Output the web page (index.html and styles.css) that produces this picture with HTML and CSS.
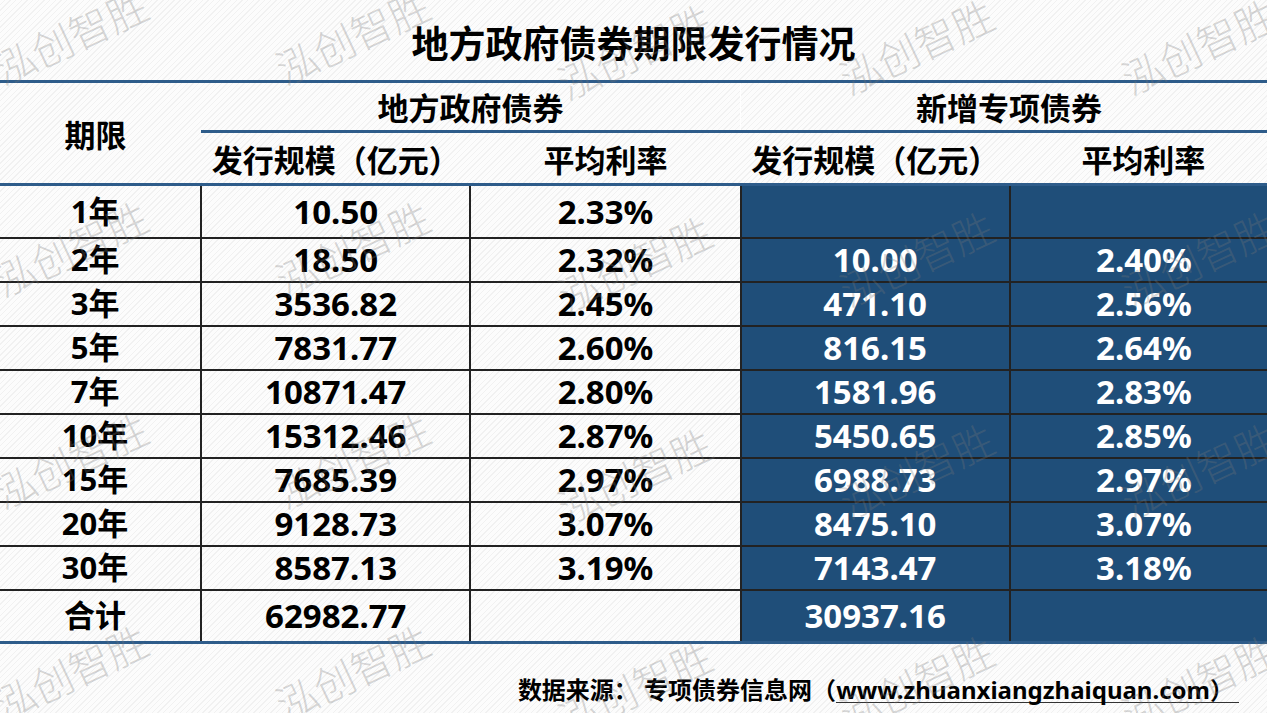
FILE: index.html
```html
<!DOCTYPE html>
<html lang="zh-CN">
<head>
<meta charset="utf-8">
<title>地方政府债券期限发行情况</title>
<link rel="stylesheet" href="styles.css">
</head>
<body>
<div class="page">
  <h1 class="title">地方政府债券期限发行情况</h1>
  <div class="table-wrap">
    <table class="bonds">
      <colgroup>
        <col class="c-term"><col class="c-amt"><col class="c-rate"><col class="c-amt"><col class="c-rate2">
      </colgroup>
      <thead>
        <tr class="group-row">
          <th rowspan="2" class="term-head">期限</th>
          <th colspan="2" class="grp">地方政府债券</th>
          <th colspan="2" class="grp grp-new">新增专项债券</th>
        </tr>
        <tr class="col-row">
          <th>发行规模（亿元）</th>
          <th>平均利率</th>
          <th>发行规模（亿元）</th>
          <th>平均利率</th>
        </tr>
      </thead>
      <tbody>
        <tr class="tall"><td class="term">1年</td><td>10.50</td><td>2.33%</td><td class="blue"></td><td class="blue"></td></tr>
        <tr><td class="term">2年</td><td>18.50</td><td>2.32%</td><td class="blue">10.00</td><td class="blue">2.40%</td></tr>
        <tr><td class="term">3年</td><td>3536.82</td><td>2.45%</td><td class="blue">471.10</td><td class="blue">2.56%</td></tr>
        <tr><td class="term">5年</td><td>7831.77</td><td>2.60%</td><td class="blue">816.15</td><td class="blue">2.64%</td></tr>
        <tr><td class="term">7年</td><td>10871.47</td><td>2.80%</td><td class="blue">1581.96</td><td class="blue">2.83%</td></tr>
        <tr><td class="term">10年</td><td>15312.46</td><td>2.87%</td><td class="blue">5450.65</td><td class="blue">2.85%</td></tr>
        <tr><td class="term">15年</td><td>7685.39</td><td>2.97%</td><td class="blue">6988.73</td><td class="blue">2.97%</td></tr>
        <tr><td class="term">20年</td><td>9128.73</td><td>3.07%</td><td class="blue">8475.10</td><td class="blue">3.07%</td></tr>
        <tr><td class="term">30年</td><td>8587.13</td><td>3.19%</td><td class="blue">7143.47</td><td class="blue">3.18%</td></tr>
        <tr class="tall"><td class="term">合计</td><td>62982.77</td><td></td><td class="blue">30937.16</td><td class="blue"></td></tr>
      </tbody>
    </table>
  </div>
  <div class="source">数据来源： 专项债券信息网（<span class="url">www.zhuanxiangzhaiquan.com）</span></div>
  <div class="watermarks">
    <div class="wm-cell"><span class="wm">泓创智胜</span></div>
    <div class="wm-cell"><span class="wm">泓创智胜</span></div>
    <div class="wm-cell"><span class="wm">泓创智胜</span></div>
    <div class="wm-cell"><span class="wm">泓创智胜</span></div>
    <div class="wm-cell"><span class="wm">泓创智胜</span></div>
    <div class="wm-cell"><span class="wm">泓创智胜</span></div>
    <div class="wm-cell"><span class="wm">泓创智胜</span></div>
    <div class="wm-cell"><span class="wm">泓创智胜</span></div>
    <div class="wm-cell"><span class="wm">泓创智胜</span></div>
    <div class="wm-cell"><span class="wm">泓创智胜</span></div>
    <div class="wm-cell"><span class="wm">泓创智胜</span></div>
    <div class="wm-cell"><span class="wm">泓创智胜</span></div>
    <div class="wm-cell"><span class="wm">泓创智胜</span></div>
    <div class="wm-cell"><span class="wm">泓创智胜</span></div>
    <div class="wm-cell"><span class="wm">泓创智胜</span></div>
    <div class="wm-cell"><span class="wm">泓创智胜</span></div>
    <div class="wm-cell"><span class="wm">泓创智胜</span></div>
    <div class="wm-cell"><span class="wm">泓创智胜</span></div>
    <div class="wm-cell"><span class="wm">泓创智胜</span></div>
    <div class="wm-cell"><span class="wm">泓创智胜</span></div>
  </div>
</div>
</body>
</html>
```

FILE: styles.css
```css
* { box-sizing: border-box; }

html, body {
  margin: 0;
  padding: 0;
}

body {
  width: 1267px;
  height: 713px;
  overflow: hidden;
  background: repeating-linear-gradient(135deg, #fcfcfc 0 3px, #f1f1f1 3px 4px);
  font-family: "Noto Sans", "Noto Sans CJK SC", sans-serif;
  color: #000;
}

.page {
  position: relative;
  width: 1267px;
  height: 713px;
  overflow: hidden;
}

.title {
  margin: 0;
  height: 80px;
  padding-top: 4px;
  display: flex;
  align-items: center;
  justify-content: center;
  font-family: "Noto Sans CJK SC", sans-serif;
  font-size: 37px;
  font-weight: 700;
  line-height: 1;
}

.table-wrap {
  width: 1277px;
}

.bonds {
  width: 1277px;
  table-layout: fixed;
  border-collapse: collapse;
  border-top: 3px solid #2e5c8a;
  border-bottom: 3px solid #2e5c8a;
}

.c-term { width: 201px; }
.c-amt { width: 269px; }
.c-rate { width: 270px; }
.c-rate2 { width: 267px; }

.bonds th,
.bonds td {
  padding: 0;
  text-align: center;
  font-weight: 700;
  line-height: 1;
}

.bonds th {
  font-family: "Noto Sans CJK SC", sans-serif;
  font-size: 31px;
}

.group-row th { height: 50px; }

.grp { border-bottom: 3px solid #2e5c8a; }
.grp-new { border-left: 1px solid #ffffff; }

.col-row th {
  height: 53px;
  border-bottom: 3px solid #2e5c8a;
}

.term-head {
  padding-right: 10px !important;
  border-bottom: 3px solid #2e5c8a;
}

.bonds td {
  font-size: 33px;
  height: 44px;
  border: 2px solid #222;
}

.bonds td.term {
  border-left: none;
  font-size: 31px;
  padding-right: 10px;
}

.bonds td:last-child { border-right: none; }

.bonds tr.tall td { height: 53px; }

.bonds td.blue {
  background: #1f4e79;
  color: #fff;
}

.source {
  display: flex;
  justify-content: flex-end;
  align-items: baseline;
  padding: 31px 28px 0 0;
  font-size: 24px;
  font-weight: 700;
  line-height: 30px;
  white-space: pre;
}

.url {
  display: inline-block;
  line-height: 25px;
  padding-right: 5px;
  border-bottom: 1px solid #333;
}

.watermarks {
  position: absolute;
  top: -71px;
  left: -71px;
  display: grid;
  grid-template-columns: repeat(5, 282px);
  grid-template-rows: repeat(4, 212px);
  pointer-events: none;
}

.wm-cell {
  display: flex;
  align-items: center;
  justify-content: center;
}

.wm-cell:nth-child(5n+3) { padding-top: 30px; }
.wm-cell:nth-child(5n+4),
.wm-cell:nth-child(5n) { padding-top: 20px; }

.wm {
  font-family: "Noto Sans CJK SC", sans-serif;
  font-weight: 300;
  font-size: 41px;
  color: rgba(120, 120, 120, 0.3);
  transform: rotate(-25deg);
  white-space: nowrap;
}
```
